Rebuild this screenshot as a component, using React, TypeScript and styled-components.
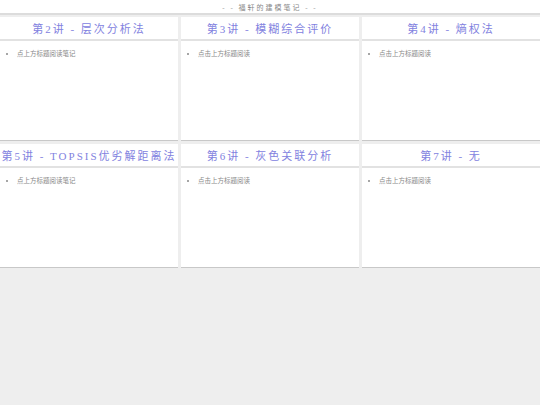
import React from "react";
import styled, { createGlobalStyle } from "styled-components";

const GlobalStyle = createGlobalStyle`
  html, body {
    margin: 0;
    padding: 0;
    background: #eeeeee;
    font-family: "Liberation Serif", "Noto Sans CJK SC", serif;
  }
`;

const Page = styled.div`
  width: 540px;
  min-height: 405px;
  background: #eeeeee;
`;

const TopBar = styled.header`
  height: 13px;
  background: #ffffff;
  border-bottom: 2px solid #dcdcdc;
  display: flex;
  align-items: center;
  justify-content: center;
  color: #888888;
  font-size: 7px;
  letter-spacing: 2px;
`;

const Grid = styled.div`
  display: grid;
  grid-template-columns: repeat(3, 178px);
  column-gap: 3px;
  row-gap: 3px;
  padding-top: 2px;
`;

const Card = styled.section`
  height: 123px;
  background: #ffffff;
  border-bottom: 1px solid #c8c8c8;
  display: flex;
  flex-direction: column;
`;

const Title = styled.h2`
  margin: 0;
  height: 22px;
  display: flex;
  align-items: center;
  justify-content: center;
  border-bottom: 2px solid #e2e2e2;
  color: #8282e0;
  font-size: 11px;
  font-weight: normal;
  letter-spacing: 2px;
  white-space: nowrap;
`;

const List = styled.ul`
  margin: 0;
  padding: 7px 0 0 17px;
  color: #888888;
  font-family: "Noto Sans CJK SC", sans-serif;
  font-size: 6.5px;

  li::marker {
    font-size: 6px;
  }
`;

const lectures = [
  { title: "第2讲 - 层次分析法", hint: "点上方标题阅读笔记" },
  { title: "第3讲 - 模糊综合评价", hint: "点击上方标题阅读" },
  { title: "第4讲 - 熵权法", hint: "点击上方标题阅读" },
  { title: "第5讲 - TOPSIS优劣解距离法", hint: "点上方标题阅读笔记" },
  { title: "第6讲 - 灰色关联分析", hint: "点击上方标题阅读" },
  { title: "第7讲 - 无", hint: "点击上方标题阅读" },
];

const App: React.FC = () => {
  return (
    <Page>
      <GlobalStyle />
      <TopBar>- - 福轩的建模笔记 - -</TopBar>
      <Grid>
        {lectures.map((l) => (
          <Card key={l.title}>
            <Title>{l.title}</Title>
            <List>
              <li>{l.hint}</li>
            </List>
          </Card>
        ))}
      </Grid>
    </Page>
  );
};

export default App;
